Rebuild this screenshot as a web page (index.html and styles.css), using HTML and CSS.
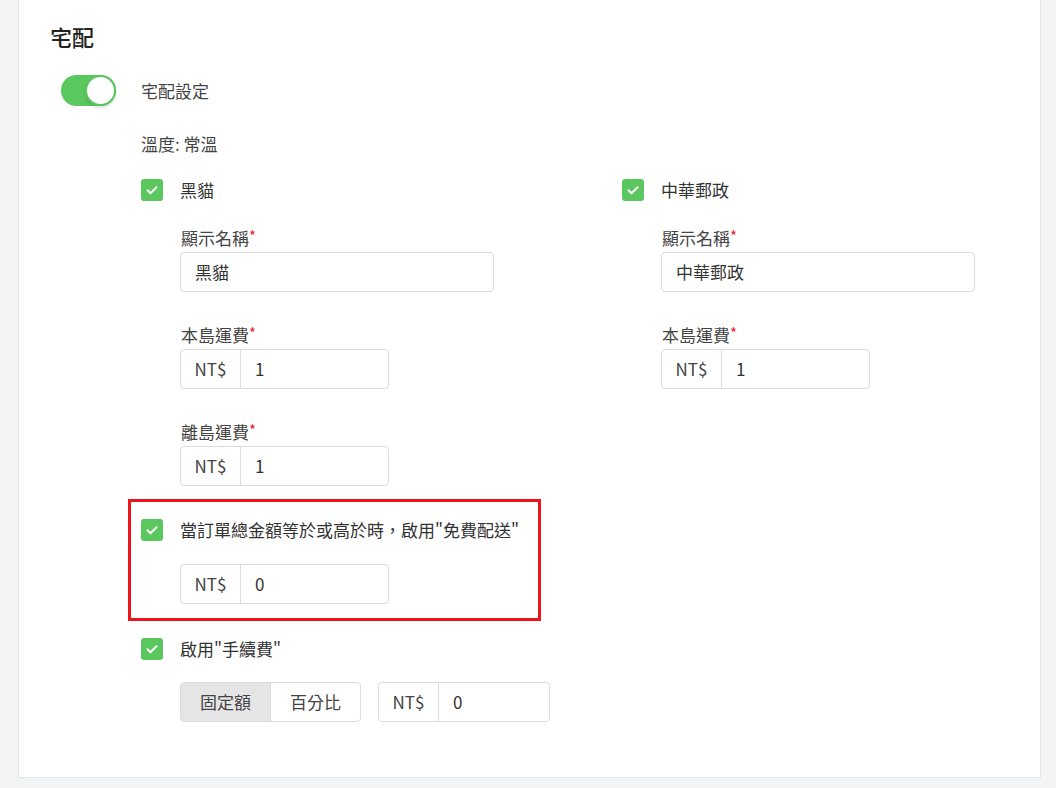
FILE: index.html
```html
<!DOCTYPE html>
<html lang="zh-Hant">
<head>
<meta charset="utf-8">
<title>宅配</title>
<link rel="stylesheet" href="styles.css">
</head>
<body>
<div class="page">
  <section class="card">
    <h2 class="title">宅配</h2>
    <div class="toggle-row">
      <span class="toggle"><span class="knob"></span></span>
      <span class="toggle-label">宅配設定</span>
    </div>
    <div class="body">
      <div class="temp">溫度: 常溫</div>
      <div class="cols">
        <div class="col">
          <div class="check-row">
            <span class="check"><svg viewBox="0 0 22 22" width="22" height="22"><path d="M6.5 11.2l3 3 6-6" fill="none" stroke="#fff" stroke-width="2" stroke-linecap="round" stroke-linejoin="round"/></svg></span>
            <span class="check-label">黑貓</span>
          </div>
          <div class="field first">
            <div class="label">顯示名稱<span class="req">*</span></div>
            <div class="input wide">黑貓</div>
          </div>
          <div class="field">
            <div class="label">本島運費<span class="req">*</span></div>
            <div class="group"><span class="prefix">NT$</span><span class="val">1</span></div>
          </div>
          <div class="field">
            <div class="label">離島運費<span class="req">*</span></div>
            <div class="group"><span class="prefix">NT$</span><span class="val">1</span></div>
          </div>
        </div>
        <div class="col">
          <div class="check-row">
            <span class="check"><svg viewBox="0 0 22 22" width="22" height="22"><path d="M6.5 11.2l3 3 6-6" fill="none" stroke="#fff" stroke-width="2" stroke-linecap="round" stroke-linejoin="round"/></svg></span>
            <span class="check-label">中華郵政</span>
          </div>
          <div class="field first">
            <div class="label">顯示名稱<span class="req">*</span></div>
            <div class="input wide">中華郵政</div>
          </div>
          <div class="field">
            <div class="label">本島運費<span class="req">*</span></div>
            <div class="group"><span class="prefix">NT$</span><span class="val">1</span></div>
          </div>
        </div>
      </div>
      <div class="highlight">
        <div class="check-row">
          <span class="check"><svg viewBox="0 0 22 22" width="22" height="22"><path d="M6.5 11.2l3 3 6-6" fill="none" stroke="#fff" stroke-width="2" stroke-linecap="round" stroke-linejoin="round"/></svg></span>
          <span class="check-label">當訂單總金額等於或高於時，啟用"免費配送"</span>
        </div>
        <div class="sub">
          <div class="group"><span class="prefix">NT$</span><span class="val">0</span></div>
        </div>
      </div>
      <div class="check-row fee">
        <span class="check"><svg viewBox="0 0 22 22" width="22" height="22"><path d="M6.5 11.2l3 3 6-6" fill="none" stroke="#fff" stroke-width="2" stroke-linecap="round" stroke-linejoin="round"/></svg></span>
        <span class="check-label">啟用"手續費"</span>
      </div>
      <div class="sub fee-row">
        <div class="seg">
          <span class="seg-btn active">固定額</span>
          <span class="seg-btn">百分比</span>
        </div>
        <div class="group small"><span class="prefix">NT$</span><span class="val">0</span></div>
      </div>
    </div>
  </section>
</div>
</body>
</html>
```

FILE: styles.css
```css
* { box-sizing: border-box; }
html, body {
  margin: 0;
  padding: 0;
  background: #f3f4f6;
  font-family: "Noto Sans CJK TC", "Noto Sans", sans-serif;
  color: #333;
}
.page {
  padding-left: 18px;
  padding-right: 15px;
}
.card {
  background: #fff;
  border: 1px solid #e4e5e7;
  border-top: none;
  width: 1023px;
  height: 778px;
  padding: 18px 0 0 31px;
}
.title {
  margin: 0;
  font-size: 22px;
  font-weight: 500;
  line-height: 36px;
  color: #222;
}
.toggle-row {
  margin-top: 21px;
  display: flex;
  align-items: center;
  height: 31px;
}
.toggle {
  margin-left: 11px;
  width: 55px;
  height: 31px;
  border-radius: 16px;
  background: #5bc75f;
  display: flex;
  justify-content: flex-end;
}
.knob {
  width: 31px;
  height: 31px;
  border-radius: 50%;
  background: #fff;
  border: 2px solid #5bc75f;
  box-shadow: 0 2px 3px rgba(0,0,0,0.12);
}
.toggle-label {
  margin-left: 25px;
  font-size: 17px;
  line-height: 24px;
  color: #444;
}
.body {
  padding-left: 91px;
}
.temp {
  margin-top: 26px;
  font-size: 17px;
  line-height: 24px;
  color: #444;
}
.cols {
  margin-top: 23px;
  display: grid;
  grid-template-columns: 481px 1fr;
}
.check-row {
  display: flex;
  align-items: center;
  height: 22px;
}
.check {
  width: 22px;
  height: 22px;
  border-radius: 3px;
  background: #5bc75f;
  display: flex;
  flex: none;
}
.check-label {
  margin-left: 17px;
  font-size: 17px;
  line-height: 24px;
  color: #333;
  white-space: nowrap;
}
.field {
  margin-left: 39px;
  margin-top: 31px;
}
.field.first {
  margin-top: 25px;
}
.label {
  font-size: 17px;
  line-height: 24px;
  color: #444;
  margin-bottom: 2px;
  padding-left: 1px;
}
.req {
  color: #e3262b;
  font-size: 15px;
  vertical-align: top;
  line-height: 20px;
}
.input {
  height: 40px;
  border: 1px solid #dcdcdc;
  border-radius: 4px;
  padding: 0 14px;
  font-size: 17px;
  line-height: 38px;
  color: #333;
}
.input.wide {
  width: 314px;
}
.group {
  display: flex;
  width: 209px;
  height: 40px;
  border: 1px solid #dcdcdc;
  border-radius: 4px;
  font-size: 17px;
  line-height: 38px;
  color: #333;
}
.group.small {
  width: 172px;
}
.prefix {
  width: 60px;
  text-align: center;
  border-right: 1px solid #dcdcdc;
  color: #444;
}
.val {
  padding-left: 14px;
}
.highlight {
  margin-top: 13px;
  margin-left: -13px;
  width: 413px;
  border: 3px solid #f0141c;
  padding: 17px 0 14px 10px;
}
.sub {
  margin-left: 39px;
  margin-top: 23px;
}
.fee {
  margin-top: 17px;
}
.fee-row {
  margin-top: 22px;
  display: flex;
  gap: 17px;
}
.seg {
  display: flex;
  width: 181px;
  height: 40px;
  border: 1px solid #dcdcdc;
  border-radius: 4px;
  overflow: hidden;
  font-size: 17px;
  line-height: 38px;
}
.seg-btn {
  flex: 1;
  text-align: center;
  color: #444;
}
.seg-btn.active {
  background: #e5e5e5;
  border-right: 1px solid #dcdcdc;
}
```
